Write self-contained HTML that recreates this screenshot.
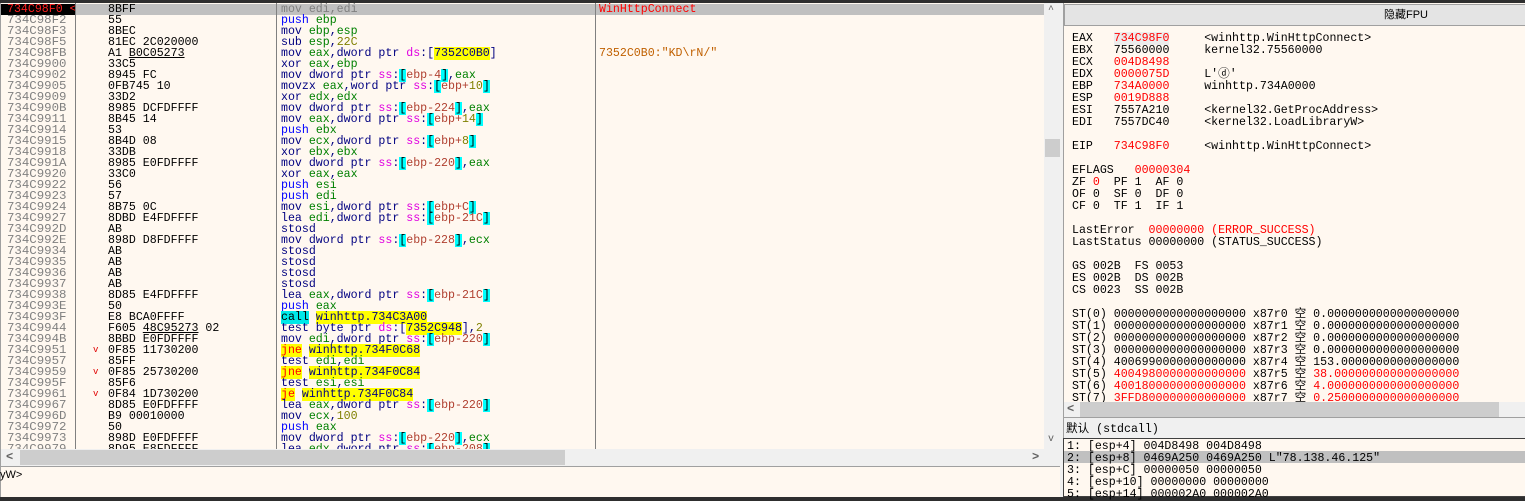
<!DOCTYPE html>
<html><head><meta charset="utf-8"><style>
*{margin:0;padding:0;box-sizing:border-box}
body{width:1525px;height:501px;background:#2e2e2e;position:relative;overflow:hidden;font-family:"Liberation Mono","Noto Sans CJK SC",monospace;font-size:11.6px}
.abs{position:absolute}
#dis{left:0;top:3px;width:1044px;height:446px;background:#fff8f0;overflow:hidden;border-left:1px solid #a0a0a0}
.row{position:absolute;left:0;width:1044px;height:11px;line-height:11px;white-space:pre}
.a{position:absolute;left:6px;color:#808080;font-size:12.4px}
.by{position:absolute;left:107px;color:#000}
.ar{position:absolute;left:92px;color:#e00000;font-size:9px}
.in{position:absolute;left:280px;color:#000080}
.cm{position:absolute;left:598px;color:#c06000}
.vl{position:absolute;top:0;width:1px;height:446px;background:#808080}
.m{color:#000080}.pu{color:#0000ff}.r{color:#008000}.s{color:#e000e0}.b{background:#00ffff;color:#000}.n{color:#808000}.e{color:#b04030}
.y{background:#ffff00;color:#000080}.jr{background:#ffff00;color:#ff0000}.cl{background:#00e8e8;color:#000}
.u{text-decoration:underline}
#reg{left:1063px;top:3px;width:462px;height:399px;background:#fff8f0;border-left:1px solid #a0a0a0;overflow:hidden}
#reg pre{position:absolute;left:8px;top:30px;font:11.6px/12px "Liberation Mono","Noto Sans CJK SC",monospace;color:#000}
.red{color:#ff0000}
</style></head><body>
<div class="abs" id="dis">
<div class="row" style="top:1px;background:#c0c0c0"><span style="position:absolute;left:0;width:74px;height:11px;background:#000"></span><span class="a" style="color:#ff2020;font-size:11.6px">734C98F0 &lt;</span><span class="by">8BFF</span><span class="in" style="color:#808080">mov edi,edi</span><span class="cm" style="color:#ff0000">WinHttpConnect</span></div>
<div class="row" style="top:12px"><span class="a">734C98F2</span><span class="by">55</span><span class="in"><span class="pu">push</span> <span class="r">ebp</span></span></div>
<div class="row" style="top:23px"><span class="a">734C98F3</span><span class="by">8BEC</span><span class="in">mov <span class="r">ebp</span>,<span class="r">esp</span></span></div>
<div class="row" style="top:34px"><span class="a">734C98F5</span><span class="by">81EC 2C020000</span><span class="in">sub <span class="r">esp</span>,<span class="n">22C</span></span></div>
<div class="row" style="top:45px"><span class="a">734C98FB</span><span class="by">A1 <span class="u">B0C05273</span></span><span class="in">mov <span class="r">eax</span>,dword ptr <span class="s">ds</span>:[<span class="y">7352C0B0</span>]</span><span class="cm">7352C0B0:"KD\rN/"</span></div>
<div class="row" style="top:56px"><span class="a">734C9900</span><span class="by">33C5</span><span class="in">xor <span class="r">eax</span>,<span class="r">ebp</span></span></div>
<div class="row" style="top:67px"><span class="a">734C9902</span><span class="by">8945 FC</span><span class="in">mov dword ptr <span class="s">ss</span>:<span class="b">[</span><span class="e">ebp-4</span><span class="b">]</span>,<span class="r">eax</span></span></div>
<div class="row" style="top:78px"><span class="a">734C9905</span><span class="by">0FB745 10</span><span class="in">movzx <span class="r">eax</span>,word ptr <span class="s">ss</span>:<span class="b">[</span><span class="e">ebp+<span class="n">10</span></span><span class="b">]</span></span></div>
<div class="row" style="top:89px"><span class="a">734C9909</span><span class="by">33D2</span><span class="in">xor <span class="r">edx</span>,<span class="r">edx</span></span></div>
<div class="row" style="top:100px"><span class="a">734C990B</span><span class="by">8985 DCFDFFFF</span><span class="in">mov dword ptr <span class="s">ss</span>:<span class="b">[</span><span class="e">ebp-224</span><span class="b">]</span>,<span class="r">eax</span></span></div>
<div class="row" style="top:111px"><span class="a">734C9911</span><span class="by">8B45 14</span><span class="in">mov <span class="r">eax</span>,dword ptr <span class="s">ss</span>:<span class="b">[</span><span class="e">ebp+<span class="n">14</span></span><span class="b">]</span></span></div>
<div class="row" style="top:122px"><span class="a">734C9914</span><span class="by">53</span><span class="in"><span class="pu">push</span> <span class="r">ebx</span></span></div>
<div class="row" style="top:133px"><span class="a">734C9915</span><span class="by">8B4D 08</span><span class="in">mov <span class="r">ecx</span>,dword ptr <span class="s">ss</span>:<span class="b">[</span><span class="e">ebp+<span class="n">8</span></span><span class="b">]</span></span></div>
<div class="row" style="top:144px"><span class="a">734C9918</span><span class="by">33DB</span><span class="in">xor <span class="r">ebx</span>,<span class="r">ebx</span></span></div>
<div class="row" style="top:155px"><span class="a">734C991A</span><span class="by">8985 E0FDFFFF</span><span class="in">mov dword ptr <span class="s">ss</span>:<span class="b">[</span><span class="e">ebp-220</span><span class="b">]</span>,<span class="r">eax</span></span></div>
<div class="row" style="top:166px"><span class="a">734C9920</span><span class="by">33C0</span><span class="in">xor <span class="r">eax</span>,<span class="r">eax</span></span></div>
<div class="row" style="top:177px"><span class="a">734C9922</span><span class="by">56</span><span class="in"><span class="pu">push</span> <span class="r">esi</span></span></div>
<div class="row" style="top:188px"><span class="a">734C9923</span><span class="by">57</span><span class="in"><span class="pu">push</span> <span class="r">edi</span></span></div>
<div class="row" style="top:199px"><span class="a">734C9924</span><span class="by">8B75 0C</span><span class="in">mov <span class="r">esi</span>,dword ptr <span class="s">ss</span>:<span class="b">[</span><span class="e">ebp+C</span><span class="b">]</span></span></div>
<div class="row" style="top:210px"><span class="a">734C9927</span><span class="by">8DBD E4FDFFFF</span><span class="in">lea <span class="r">edi</span>,dword ptr <span class="s">ss</span>:<span class="b">[</span><span class="e">ebp-21C</span><span class="b">]</span></span></div>
<div class="row" style="top:221px"><span class="a">734C992D</span><span class="by">AB</span><span class="in">stosd</span></div>
<div class="row" style="top:232px"><span class="a">734C992E</span><span class="by">898D D8FDFFFF</span><span class="in">mov dword ptr <span class="s">ss</span>:<span class="b">[</span><span class="e">ebp-228</span><span class="b">]</span>,<span class="r">ecx</span></span></div>
<div class="row" style="top:243px"><span class="a">734C9934</span><span class="by">AB</span><span class="in">stosd</span></div>
<div class="row" style="top:254px"><span class="a">734C9935</span><span class="by">AB</span><span class="in">stosd</span></div>
<div class="row" style="top:265px"><span class="a">734C9936</span><span class="by">AB</span><span class="in">stosd</span></div>
<div class="row" style="top:276px"><span class="a">734C9937</span><span class="by">AB</span><span class="in">stosd</span></div>
<div class="row" style="top:287px"><span class="a">734C9938</span><span class="by">8D85 E4FDFFFF</span><span class="in">lea <span class="r">eax</span>,dword ptr <span class="s">ss</span>:<span class="b">[</span><span class="e">ebp-21C</span><span class="b">]</span></span></div>
<div class="row" style="top:298px"><span class="a">734C993E</span><span class="by">50</span><span class="in"><span class="pu">push</span> <span class="r">eax</span></span></div>
<div class="row" style="top:309px"><span class="a">734C993F</span><span class="by">E8 BCA0FFFF</span><span class="in"><span class="cl">call</span> <span class="y">winhttp.734C3A00</span></span></div>
<div class="row" style="top:320px"><span class="a">734C9944</span><span class="by">F605 <span class="u">48C95273</span> 02</span><span class="in">test byte ptr <span class="s">ds</span>:[<span class="y">7352C948</span>],<span class="n">2</span></span></div>
<div class="row" style="top:331px"><span class="a">734C994B</span><span class="by">8BBD E0FDFFFF</span><span class="in">mov <span class="r">edi</span>,dword ptr <span class="s">ss</span>:<span class="b">[</span><span class="e">ebp-220</span><span class="b">]</span></span></div>
<div class="row" style="top:342px"><span class="a">734C9951</span><span class="ar">v</span><span class="by">0F85 11730200</span><span class="in"><span class="jr">jne</span> <span class="y">winhttp.734F0C68</span></span></div>
<div class="row" style="top:353px"><span class="a">734C9957</span><span class="by">85FF</span><span class="in">test <span class="r">edi</span>,<span class="r">edi</span></span></div>
<div class="row" style="top:364px"><span class="a">734C9959</span><span class="ar">v</span><span class="by">0F85 25730200</span><span class="in"><span class="jr">jne</span> <span class="y">winhttp.734F0C84</span></span></div>
<div class="row" style="top:375px"><span class="a">734C995F</span><span class="by">85F6</span><span class="in">test <span class="r">esi</span>,<span class="r">esi</span></span></div>
<div class="row" style="top:386px"><span class="a">734C9961</span><span class="ar">v</span><span class="by">0F84 1D730200</span><span class="in"><span class="jr">je</span> <span class="y">winhttp.734F0C84</span></span></div>
<div class="row" style="top:397px"><span class="a">734C9967</span><span class="by">8D85 E0FDFFFF</span><span class="in">lea <span class="r">eax</span>,dword ptr <span class="s">ss</span>:<span class="b">[</span><span class="e">ebp-220</span><span class="b">]</span></span></div>
<div class="row" style="top:408px"><span class="a">734C996D</span><span class="by">B9 00010000</span><span class="in">mov <span class="r">ecx</span>,<span class="n">100</span></span></div>
<div class="row" style="top:419px"><span class="a">734C9972</span><span class="by">50</span><span class="in"><span class="pu">push</span> <span class="r">eax</span></span></div>
<div class="row" style="top:430px"><span class="a">734C9973</span><span class="by">898D E0FDFFFF</span><span class="in">mov dword ptr <span class="s">ss</span>:<span class="b">[</span><span class="e">ebp-220</span><span class="b">]</span>,<span class="r">ecx</span></span></div>
<div class="row" style="top:441px"><span class="a">734C9979</span><span class="by">8D95 E8FDFFFF</span><span class="in">lea <span class="r">edx</span>,dword ptr <span class="s">ss</span>:<span class="b">[</span><span class="e">ebp-208</span><span class="b">]</span></span></div>
<div class="vl" style="left:74px"></div><div class="vl" style="left:275px"></div><div class="vl" style="left:594px"></div>
</div>
<div class="abs" style="left:1044px;top:3px;width:16px;height:446px;background:#f0f0f0"></div>
<div class="abs" style="left:1045px;top:139px;width:15px;height:18px;background:#cdcdcd"></div>
<div class="abs" style="left:1048px;top:5px;font-size:10px;color:#606060">^</div>
<div class="abs" style="left:1048px;top:434px;font-size:10px;color:#606060">v</div>
<div class="abs" style="left:0;top:449px;width:1060px;height:17px;background:#f0f0f0;border-left:1px solid #a0a0a0"></div>
<div class="abs" style="left:20px;top:450px;width:545px;height:15px;background:#cdcdcd"></div>
<div class="abs" style="left:6px;top:450px;font-size:12px;color:#606060;font-weight:bold">&lt;</div>
<div class="abs" style="left:1032px;top:450px;font-size:12px;color:#606060;font-weight:bold">&gt;</div>
<div class="abs" style="left:0;top:466px;width:1060px;height:31px;background:#fff8f0;border-top:1px solid #a0a0a0;border-left:1px solid #a0a0a0"></div>
<div class="abs" style="left:0;top:469px;font-size:11px;color:#000;font-family:'Liberation Sans',sans-serif">yW&gt;</div>
<div class="abs" style="left:1060px;top:3px;width:3px;height:494px;background:#f0f0f0"></div>
<div class="abs" id="reg">
<div class="abs" style="left:0;top:1px;width:462px;height:22px;background:#e4e4e4;border:1px solid #a0a0a0;font-family:'Liberation Sans','Noto Sans CJK SC',sans-serif;font-size:11px;line-height:20px"><span style="position:absolute;left:319px">隐藏FPU</span></div>
<pre>EAX   <span class="red" style="background:#ececec">734C98F0</span>     &lt;winhttp.WinHttpConnect&gt;
EBX   75560000     kernel32.75560000
ECX   <span class="red">004D8498</span>
EDX   <span class="red">0000075D</span>     L'ⓓ'
EBP   <span class="red">734A0000</span>     winhttp.734A0000
ESP   <span class="red">0019D888</span>
ESI   7557A210     &lt;kernel32.GetProcAddress&gt;
EDI   7557DC40     &lt;kernel32.LoadLibraryW&gt;

EIP   <span class="red">734C98F0</span>     &lt;winhttp.WinHttpConnect&gt;

EFLAGS   <span class="red">00000304</span>
ZF <span class="red">0</span>  PF 1  AF 0
OF 0  SF 0  DF 0
CF 0  TF 1  IF 1

LastError  <span class="red">00000000 (ERROR_SUCCESS)</span>
LastStatus 00000000 (STATUS_SUCCESS)

GS 002B  FS 0053
ES 002B  DS 002B
CS 0023  SS 002B

ST(0) 0000000000000000000 x87r0 空 0.0000000000000000000
ST(1) 0000000000000000000 x87r1 空 0.0000000000000000000
ST(2) 0000000000000000000 x87r2 空 0.0000000000000000000
ST(3) 0000000000000000000 x87r3 空 0.0000000000000000000
ST(4) 4006990000000000000 x87r4 空 153.00000000000000000
ST(5) <span class="red">4004980000000000000</span> x87r5 空 <span class="red">38.000000000000000000</span>
ST(6) <span class="red">4001800000000000000</span> x87r6 空 <span class="red">4.0000000000000000000</span>
ST(7) <span class="red">3FFD800000000000000</span> x87r7 空 <span class="red">0.2500000000000000000</span></pre>
</div>
<div class="abs" style="left:1063px;top:402px;width:462px;height:15px;background:#f0f0f0;border-left:1px solid #a0a0a0"></div>
<div class="abs" style="left:1080px;top:402px;width:419px;height:15px;background:#cdcdcd"></div>
<div class="abs" style="left:1067px;top:402px;font-size:12px;color:#606060;font-weight:bold">&lt;</div>
<div class="abs" style="left:1063px;top:417px;width:462px;height:21px;background:#f0f0f0;border-top:1px solid #a0a0a0;border-left:1px solid #a0a0a0"></div>
<div class="abs" style="left:1066px;top:421px;font-size:11.6px;line-height:14px;color:#000;white-space:pre"><span style="font-family:'Noto Sans CJK SC',sans-serif">默认</span> (stdcall)</div>
<div class="abs" style="left:1063px;top:438px;width:462px;height:59px;background:#fff8f0;border:1px solid #404040;border-right:none"></div>
<div class="abs" style="left:1064px;top:451px;width:461px;height:12px;background:#c0c0c0"></div>
<pre class="abs" style="left:1067px;top:441px;font:11.6px/12px 'Liberation Mono',monospace;color:#000">1: [esp+4] 004D8498 004D8498
2: [esp+8] 0469A250 0469A250 L"78.138.46.125"
3: [esp+C] 00000050 00000050
4: [esp+10] 00000000 00000000
5: [esp+14] 000002A0 000002A0</pre>
</body></html>
